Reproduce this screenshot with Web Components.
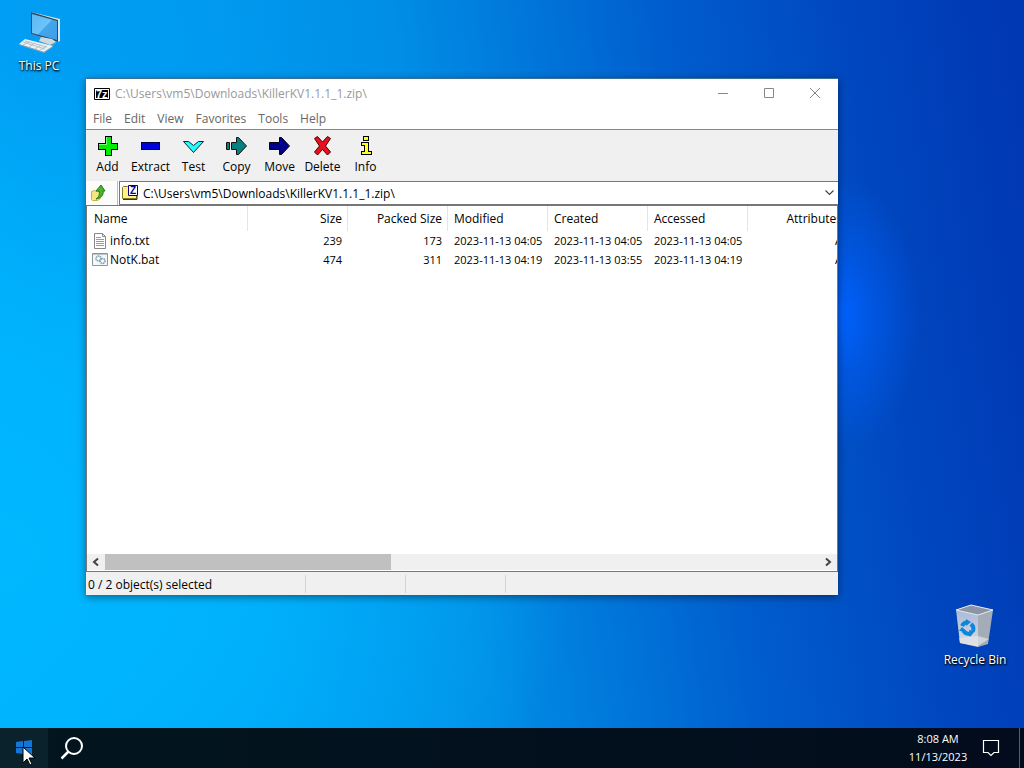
<!DOCTYPE html>
<html lang="en">
<head>
<meta charset="utf-8">
<meta name="viewport" content="width=device-width, initial-scale=1">
<title>Desktop</title>
<style>
  body { margin: 0; font: 12px/16px "Open Sans", "Noto Sans", sans-serif; color: #000; }
</style>
</head>
<body>
<desktop-shell>
  <desktop-icon class="pc" label="This PC">
    <svg width="48" height="48" viewBox="0 0 48 48" aria-hidden="true">
      <defs><linearGradient id="scr" x1="0" y1="0" x2="1" y2="1"><stop offset="0" stop-color="#5db8f2"/><stop offset=".5" stop-color="#6cc4f8"/><stop offset=".52" stop-color="#43a6ec"/><stop offset="1" stop-color="#3e9fe6"/></linearGradient></defs>
      <path d="M16 4 45 11v22l-2 1L16 26z" fill="#d9e6ee"/>
      <path d="M16 4 43 12v22L16 26z" fill="#2b4c66"/>
      <path d="M17 6 42 13v19L17 25z" fill="url(#scr)"/>
      <path d="M26 29 37 31l4 3-6 3-11-4z" fill="#cfd9e0"/>
      <path d="M24 34l11 4 6-4v1l-6 4-11-4z" fill="#8ea0ac"/>
      <path d="M10 31 38 38 29 44 4 36z" fill="#edf1f4"/>
      <path d="M4 36 29 44l9-6v1l-9 6L4 37z" fill="#93a4b0"/>
      <path d="M10 33l22 6M8 34l22 7M14 34l-6 3M20 35l-6 4M26 37l-6 4M32 38l-7 4" stroke="#b4c0c8" fill="none"/>
    </svg>
  </desktop-icon>
  <desktop-icon class="bin" label="Recycle Bin">
    <svg width="48" height="48" viewBox="0 0 48 48" aria-hidden="true">
      <defs><linearGradient id="bf" x1="0" y1="0" x2="0" y2="1"><stop offset="0" stop-color="#a9b9d8"/><stop offset="1" stop-color="#d9dde2"/></linearGradient></defs>
      <path d="M5 8 27 13 27 45 9 41z" fill="url(#bf)"/>
      <path d="M27 13 42 8 37 42 27 45z" fill="#a4acb8"/>
      <path d="M5 8 20 3 42 8 27 13z" fill="#8b95a6" stroke="#e8edf2"/>
      <path d="M8 36 27 34 38 37 27 44 9 41z" fill="#e3e4e5" opacity=".7"/>
      <g fill="none" stroke="#0b86dc" stroke-width="4"><path d="M11 24a7 7 0 0 1 6-4"/><path d="M20 22a8 7 0 0 1 2 7"/><path d="M19 32a7 7 0 0 1-7-4"/></g>
      <path d="M15 17l5 3-5 4zM18 28l6 1-5 6zM8 29l3-4 4 4z" fill="#0b86dc"/>
    </svg>
  </desktop-icon>
  <archive-window>
    <tool-button label="Add"><svg width="24" height="24" viewBox="0 0 24 24" shape-rendering="crispEdges"><path d="M9 3h6v7h6v6h-6v6H9v-6H2v-6h7z" fill="#0e0" stroke="#000"/><path d="M10 4v7H3" fill="none" stroke="#7f7"/></svg></tool-button>
    <tool-button label="Extract"><svg width="24" height="24" viewBox="0 0 24 24" shape-rendering="crispEdges"><path d="M2 9h18v7H2z" fill="#00d" stroke="#004"/></svg></tool-button>
    <tool-button label="Test"><svg width="24" height="24" viewBox="0 0 24 24"><path d="M1.500 8.500h5l5 4 5-4h5L11.500 19.500z" fill="#2ff" stroke="#123"/></svg></tool-button>
    <tool-button label="Copy"><svg width="24" height="24" viewBox="0 0 24 24"><path d="M1.500 9.500h3v7h-3zM6.500 9.500h5v-5h2l8 8.500-8 8.500h-2v-5h-5z" fill="#088080" stroke="#111"/></svg></tool-button>
    <tool-button label="Move"><svg width="24" height="24" viewBox="0 0 24 24"><path d="M1.500 9.500h10v-5h2l8 8.500-8 8.500h-2v-5h-10z" fill="#00008a" stroke="#001"/></svg></tool-button>
    <tool-button label="Delete"><svg width="24" height="24" viewBox="0 0 24 24"><path d="M3.500 5.500l3-2 5 5.500 5-5.500 3 2-5 7.500 5 6-3 3-5-5.500-5 5.500-3-3 5-6z" fill="#e8101c" stroke="#400"/></svg></tool-button>
    <tool-button label="Info"><svg width="24" height="24" viewBox="0 0 24 24" shape-rendering="crispEdges"><path d="M9 3h5v4H9zM7 9h7v9h3v3H7v-3h3v-6H7z" fill="#ff2" stroke="#000"/></svg></tool-button>
  </archive-window>
</desktop-shell>

<script>
const define = (name, html, setup) => {
  const template = document.createElement('template');
  template.innerHTML = html;
  customElements.define(name, class extends HTMLElement {
    connectedCallback() {
      if (this.shadowRoot) return;
      const root = this.attachShadow({ mode: 'open' });
      root.append(template.content.cloneNode(true));
      if (setup) setup(this, root);
    }
  });
};

/* Icon on the desktop: picture in the slot, caption from the label attribute. */
define('desktop-icon', `
<style>
  :host { display: block; width: 76px; }
  button { width: 100%; border: 0; padding: 0; background: none; font: inherit; color: #fff;
    display: flex; flex-direction: column; align-items: center; gap: 2px; white-space: nowrap;
    text-shadow: 0 1px 2px #000, 1px 1px 2px #000; }
</style>
<button><slot></slot><span></span></button>`,
(host, root) => { root.querySelector('span').textContent = host.getAttribute('label'); });

/* Toolbar command. */
define('tool-button', `
<style>
  :host { display: block; width: 43px; }
  button { width: 100%; border: 0; padding: 3px 0 0; background: none; font: inherit; color: #000;
    display: flex; flex-direction: column; align-items: center; gap: 2px; white-space: nowrap; }
</style>
<button><slot></slot><span></span></button>`,
(host, root) => { root.querySelector('span').textContent = host.getAttribute('label'); });

define('title-bar', `
<style>
  :host { display: flex; align-items: center; height: 29px; color: #999; padding-left: 7px; }
  h1 { font: inherit; margin: 0 auto 0 5px; white-space: nowrap; }
  button { width: 46px; height: 29px; border: 0; padding: 0; background: none; color: #888; display: grid; place-items: center; }
  svg { display: block; }
</style>
<svg width="17" height="16" viewBox="0 0 17 16" aria-hidden="true"><path d="M1.500 2.500h15v11h-15z" fill="#fff" stroke="#000"/><path d="M3 4h12v8H3z" fill="#000"/><text x="3" y="12" font-family="Liberation Sans" font-weight="bold" font-size="11" fill="#fff">7z</text></svg>
<h1>C:\\Users\\vm5\\Downloads\\KillerKV1.1.1_1.zip\\</h1>
<button aria-label="Minimize"><svg width="12" height="12"><path d="M1 5.500h10" stroke="currentColor"/></svg></button>
<button aria-label="Maximize"><svg width="12" height="12"><path d="M1.500 .5h9v9h-9z" fill="none" stroke="currentColor"/></svg></button>
<button aria-label="Close"><svg width="12" height="12"><path d="M1 0l10 10M11 0 1 10" stroke="currentColor"/></svg></button>`);

define('menu-bar', `
<style>
  :host { display: block; height: 21px; border-bottom: 1px solid #888; color: #666; }
  nav { display: flex; padding-left: 1px; }
  button { border: 0; padding: 3px 6px 1px; background: none; font: inherit; color: inherit; }
</style>
<nav aria-label="Menu"><button>File</button><button>Edit</button><button>View</button><button>Favorites</button><button>Tools</button><button>Help</button></nav>`);

define('address-bar', `
<style>
  :host { display: flex; height: 24px; }
  .up { width: 32px; border: 0; border-right: 1px solid #bbb; padding: 0 0 0 4px; background: #fcfcfc; display: flex; align-items: center; }
  label { flex: 1; display: flex; align-items: center; margin-left: 1px; border: 1px solid #777; border-right: 0; background: #fff; padding: 0 4px 0 1px; }
  select { flex: 1; min-width: 0; appearance: none; border: 0; padding: 2px 4px 0; background: none; font: inherit; color: #000; }
</style>
<button class="up" aria-label="Up one level"><svg width="18" height="18" viewBox="0 0 18 18"><path d="M1.500 7.500l3-1 2 1h4v7l-3 2h-5l-1-1z" fill="#f6e681" stroke="#c8b048"/><path d="M6 15c3-2 4-5 3-8H6l5-6 4 6h-2c1 4-2 7-7 8z" fill="#48b52c" stroke="#1f7a16"/></svg></button>
<label aria-label="Path"><svg width="18" height="18" viewBox="0 0 18 18"><path d="M1.500 3.500l1-1h4l1 1v4h8v7h-14z" fill="#fdf18b" stroke="#8a7a20"/><path d="M2 15.500h14v-4" fill="none" stroke="#333"/><path d="M7.500 1.500h9v10h-9z" fill="#fff" stroke="#00008c"/><text x="9" y="10" font-family="Liberation Sans" font-size="10" font-weight="bold" fill="#0a0aa0">Z</text></svg>
<select><option>C:\\Users\\vm5\\Downloads\\KillerKV1.1.1_1.zip\\</option></select>
<svg width="9" height="6" viewBox="0 0 9 6" aria-hidden="true"><path d="M.5.5l4 4 4-4" fill="none" stroke="#444" stroke-width="1.200"/></svg></label>`);

define('file-list', `
<style>
  :host { display: flex; flex-direction: column; min-height: 0; border: 1px solid #777; background: #fff; overflow: hidden; }
  .view { flex: 1; min-height: 0; overflow: hidden; }
  table { table-layout: fixed; width: 761px; border-collapse: separate; border-spacing: 0; }
  th { font-weight: 400; height: 25px; border-right: 1px solid #e5e5e5; text-align: left; }
  th, td { padding: 0 5px 0 6px; white-space: nowrap; }
  th:first-child, td:first-child { padding-left: 7px; }
  td { height: 19px; font-size: 11px; border-right: 1px solid transparent; }
  .num { text-align: right; }
  .name { display: flex; align-items: center; gap: 1px; font-size: 12px; margin-left: -2px; }
  .name svg { flex: none; }
  .bar { display: flex; height: 16px; margin-bottom: 1px; background: #f0f0f0; }
  .bar button { width: 18px; border: 0; padding: 0; background: none; display: grid; place-items: center; }
  .track { flex: 1; }
  .thumb { width: 40%; height: 100%; background: #c0c0c0; }
</style>
<div class="view"><table>
<colgroup><col style="width:161px"><col style="width:100px"><col style="width:100px"><col style="width:100px"><col style="width:100px"><col style="width:100px"><col style="width:100px"></colgroup>
<thead><tr><th>Name</th><th class="num">Size</th><th class="num">Packed Size</th><th>Modified</th><th>Created</th><th>Accessed</th><th class="num">Attributes</th></tr></thead>
<tbody>
<tr><td><span class="name"><svg width="17" height="16" viewBox="0 0 17 16"><path d="M2.500.5h8l3 3v12h-11z" fill="#fff" stroke="#888"/><path d="M10.500.5v3h3" fill="none" stroke="#888"/><path d="M4 4.500h5M4 6.500h8M4 8.500h8M4 10.500h8M4 12.500h8" stroke="#999"/></svg>info.txt</span></td><td class="num">239</td><td class="num">173</td><td>2023-11-13 04:05</td><td>2023-11-13 04:05</td><td>2023-11-13 04:05</td><td class="num">A</td></tr>
<tr><td><span class="name"><svg width="17" height="16" viewBox="0 0 17 16"><path d="M.5 1.500h15v12H.5z" fill="#f4f8fa" stroke="#8a979e"/><path d="M1 2.500h14" stroke="#b8c4ca"/><g fill="none" stroke="#7f9fae"><circle cx="6.500" cy="6.500" r="2.500" stroke-dasharray="1.500 .6" stroke-width="1.500"/><circle cx="10.500" cy="9" r="2.500" stroke-dasharray="1.500 .6" stroke-width="1.500"/></g></svg>NotK.bat</span></td><td class="num">474</td><td class="num">311</td><td>2023-11-13 04:19</td><td>2023-11-13 03:55</td><td>2023-11-13 04:19</td><td class="num">A</td></tr>
</tbody></table></div>
<div class="bar"><button aria-label="Scroll left"><svg width="8" height="10"><path d="M6 1.500 2 5l4 3.500" fill="none" stroke="#444" stroke-width="2"/></svg></button><div class="track"><div class="thumb"></div></div><button aria-label="Scroll right"><svg width="8" height="10"><path d="M2 1.500 6 5 2 8.500" fill="none" stroke="#444" stroke-width="2"/></svg></button></div>`);

define('status-bar', `
<style>
  :host { display: flex; height: 23px; background: #f0f0f0; }
  span { box-sizing: border-box; width: 100px; margin: 3px 0 2px; padding: 2px 2px 0; border-right: 1px solid #d4d4d4; white-space: nowrap; }
  .message { width: 220px; }
</style>
<span class="message">0 / 2 object(s) selected</span><span></span><span></span>`);

define('archive-window', `
<style>
  :host { display: flex; flex-direction: column; background: #fff; box-sizing: border-box; border-top: 1px solid #3a6f98; box-shadow: 0 2px 8px rgba(0,0,0,.45); }
  .tools { display: flex; height: 51px; background: #f0f0f0; }
  file-list { flex: 1; }
</style>
<title-bar></title-bar><menu-bar></menu-bar>
<div class="tools" role="toolbar"><slot></slot></div>
<address-bar></address-bar><file-list></file-list><status-bar></status-bar>`);

define('task-bar', `
<style>
  :host { display: flex; height: 40px; background: linear-gradient(90deg, #02161f, #020c1c); color: #fff; }
  button { border: 0; padding: 0; background: none; color: inherit; font: inherit; display: grid; place-items: center; width: 48px; }
  .start { background: #0a222b; }
  .clock { margin-left: auto; width: 70px; align-content: center; font-size: 11px; line-height: 18px; }
  .notes { width: 36px; margin-right: 10px; }
  .show { width: 5px; border-left: 1px solid #56616a; }
</style>
<button class="start" aria-label="Start"><svg width="16" height="16"><path d="M0 2l7-1v6H0zM8 1l8-1v7H8zM0 8h7v6l-7-1zM8 8h8v8l-8-1z" fill="#1475d4"/></svg></button>
<button aria-label="Search"><svg width="24" height="24" viewBox="0 0 24 24"><circle cx="14" cy="10" r="8" fill="none" stroke="#fff" stroke-width="2"/><path d="M8.500 15.500 1.500 22.500" stroke="#fff" stroke-width="2.500"/></svg></button>
<button class="clock"><span>8:08 AM</span><span>11/13/2023</span></button>
<button class="notes" aria-label="Notifications"><svg width="18" height="18"><path d="M1.500 1.500h15v12h-4.500l-3 3-3-3H1.500z" fill="none" stroke="#fff" stroke-width="1.200"/></svg></button>
<button class="show" aria-label="Show desktop"></button>`);

define('desktop-shell', `
<style>
  :host { position: relative; display: flex; flex-direction: column; min-height: 100vh; overflow: hidden;
    background:
      radial-gradient(ellipse 8% 18% at 82% 41%, #0062ff 0%, rgba(0,98,255,.5) 40%, rgba(0,98,255,0) 100%),
      radial-gradient(ellipse 56% 66% at 0% 72%, #00b8ff 0%, rgba(0,184,255,.8) 40%, rgba(0,184,255,0) 100%),
      linear-gradient(82deg, #00a8f8 0%, #009ef4 10%, #009cf2 25%, #008ee6 44%, #0076da 56%, #005fce 67%, #0046be 85%, #0036b2 100%); }
  main { flex: 1; position: relative; }
  ::slotted(*) { position: absolute; }
  ::slotted(archive-window) { left: 86px; right: 186px; top: 78px; bottom: 133px; }
  ::slotted(.pc) { left: 1px; top: 8px; }
  ::slotted(.bin) { right: 11px; bottom: 60px; }
  .cursor { position: absolute; left: 22px; bottom: 1px; }
</style>
<main><slot></slot></main>
<task-bar></task-bar>
<svg class="cursor" width="14" height="21" viewBox="0 0 14 21" aria-hidden="true"><path d="M1 1v16l4-4 3 6 2-1-3-6h6z" fill="#fff" stroke="#000"/></svg>`);
</script>
</body>
</html>
